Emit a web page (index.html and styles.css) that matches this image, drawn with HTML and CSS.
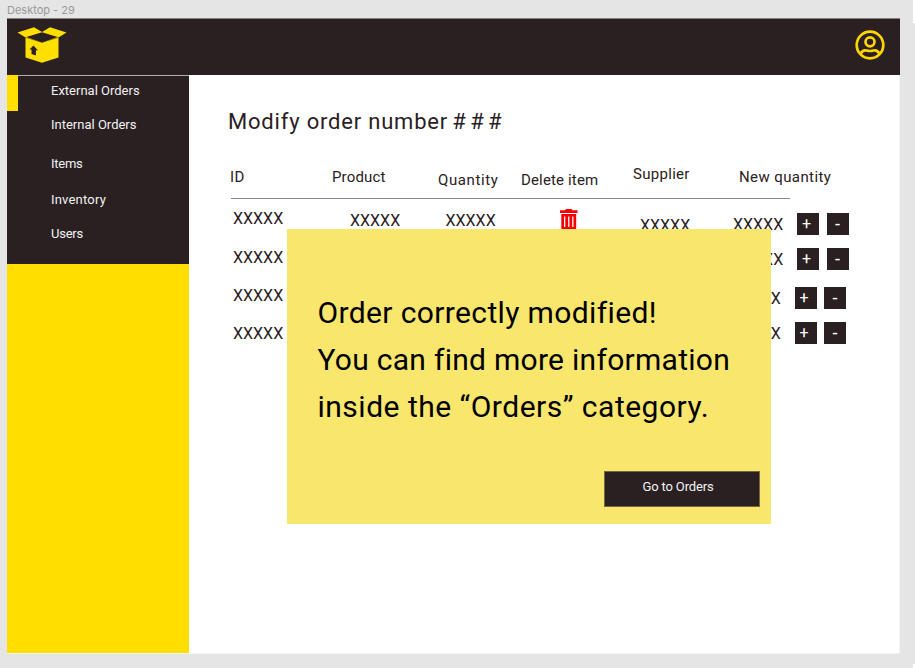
FILE: index.html
```html
<!DOCTYPE html>
<html lang="en">
<head>
<meta charset="utf-8">
<title>Modify order</title>
<link rel="stylesheet" href="styles.css">
</head>
<body>
<div class="frame-label">Desktop - 29</div>
<div class="frame">
  <header class="topbar">
    <svg class="logo" width="50" height="38" viewBox="0 0 50 38">
      <path fill="#ffdf00" d="M0.5 5.500 17 .2 25 5 33 .2 49.500 5.500 41.500 10.500V30.500L25 35.800 8.500 30.500V10.500Z"/>
      <path fill="#2a2022" d="M9.500 10 25 5.300 40.500 10 25 15.500Z"/>
      <path fill="#2a2022" d="M16.500 18.500 21 23.500 18.900 23.200V28.500L14.500 27V22.500L12.500 22.500Z"/>
      <path fill="none" stroke="#2a2022" stroke-width=".5" d="M8.500 10.300 25 15.300 41.500 10.300"/>
    </svg>
    <svg class="user" width="30" height="30" viewBox="0 0 30 30" fill="none" stroke="#ffd500" stroke-width="2.700">
      <circle cx="15" cy="15" r="13.300"/>
      <circle cx="15" cy="11.800" r="4.500"/>
      <path d="M5.500 24C7 20.500 9.500 20 11.500 20.500Q15 21.500 18.500 20.500C20.500 20 23 20.500 24.500 24"/>
    </svg>
  </header>
  <div class="content">
    <aside class="sidebar">
      <nav class="nav">
        <a class="nav-item active">External Orders</a>
        <a class="nav-item internal">Internal Orders</a>
        <a class="nav-item items">Items</a>
        <a class="nav-item inventory">Inventory</a>
        <a class="nav-item users">Users</a>
      </nav>
    </aside>
    <main class="main">
      <h1 class="title">Modify order number <span class="hashes">###</span></h1>
      <div class="thead">
        <span class="h-id">ID</span><span class="h-product">Product</span><span class="h-quantity">Quantity</span><span class="h-delete">Delete item</span><span class="h-supplier">Supplier</span><span class="h-new">New quantity</span>
      </div>
      <div class="row row-1">
        <span>XXXXX</span><span class="low">XXXXX</span><span class="low">XXXXX</span>
        <svg class="trash" width="18" height="22" viewBox="0 0 18 22"><path fill="#f90000" fill-rule="evenodd" d="M0 1.300H5L6 .1H11.500L12.500 1.300H17.500V4H0ZM1.300 5H16.200V19Q16.200 21 14.200 21H3.300Q1.300 21 1.300 19ZM4 7.500V18H5.300V7.500ZM8.100 7.500V18H9.400V7.500ZM12.200 7.500V18H13.500V7.500Z"/></svg>
        <span class="supplier">XXXXX</span>
        <div class="stepper"><span class="value">XXXXX</span><button class="step">+</button><button class="step minus">-</button></div>
      </div>
      <div class="row row-2">
        <span>XXXXX</span><span></span><span></span><span></span><span></span>
        <div class="stepper"><span class="value">XXXXX</span><button class="step">+</button><button class="step minus">-</button></div>
      </div>
      <div class="row row-3">
        <span>XXXXX</span><span></span><span></span><span></span><span></span>
        <div class="stepper"><span class="value">XXXXX</span><button class="step">+</button><button class="step minus">-</button></div>
      </div>
      <div class="row row-4">
        <span>XXXXX</span><span></span><span></span><span></span><span></span>
        <div class="stepper"><span class="value">XXXXX</span><button class="step">+</button><button class="step minus">-</button></div>
      </div>
    </main>
  </div>
</div>
<div class="modal">
  <p class="message"><span class="line-1">Order correctly modified!</span><span class="line-2">You can find more information</span><span class="line-3">inside the “Orders” category.</span></p>
  <button class="go">Go to Orders</button>
</div>
</body>
</html>
```
FILE: styles.css
```css
* { box-sizing: border-box; }
body {
  margin: 0;
  width: 915px;
  height: 668px;
  overflow: hidden;
  position: relative;
  background:
    linear-gradient(#fff, #fff) 913px 0 / 2px 23px no-repeat,
    linear-gradient(#fff, #fff) 913px 664px / 2px 4px no-repeat,
    #e5e5e5;
  font-family: Roboto, sans-serif;
  color: #2a2022;
}
button { border: 0; padding: 0; font-family: inherit; }
.frame-label {
  height: 18px;
  padding-left: 7px;
  font: 11px/20px Inter, sans-serif;
  color: #999;
}
.frame {
  width: 893px;
  height: 636px;
  margin-left: 7px;
  background: #fff;
  border-bottom: 1px solid #f2f2f2;
}
.topbar {
  display: flex;
  justify-content: space-between;
  height: 57px;
  padding: 8px 15px 0 10px;
  background: #2a2022;
  border-top: 1px solid #888384;
}
.user { margin-top: 2.500px; }
.content { display: flex; height: 578px; }
.sidebar { width: 182px; background: #ffde00; }
.nav {
  display: flex;
  flex-direction: column;
  height: 188.500px;
  background: #2a2022;
  border-top: 1px solid #b0adad;
}
.nav-item {
  flex: none;
  height: 20px;
  padding-left: 44px;
  font-size: 13px;
  line-height: 20px;
  color: #f2f2f2;
}
.nav-item.active {
  height: 36px;
  margin-top: -1px;
  padding-left: 33px;
  border-left: 11px solid #ffde00;
  line-height: 32px;
}
.internal { margin-top: 4px; }
.items { margin-top: 19px; letter-spacing: -.25px; }
.inventory { margin-top: 16px; letter-spacing: .2px; }
.users { margin-top: 14px; letter-spacing: -.25px; }
.main { flex: 1; padding-left: 35px; border-right: 1px solid #f5f5f5; }
.title {
  margin: 32px 0 0 4px;
  font-size: 22px;
  font-weight: 400;
  line-height: 30px;
  letter-spacing: .8px;
  white-space: nowrap;
}
.hashes { letter-spacing: 4.300px; margin-left: -2px; }
.thead {
  display: grid;
  grid-template-columns: 101px 106px 83px 112px 106px 51px;
  width: 559px;
  height: 62px;
  margin-left: 7px;
  padding-top: 30px;
  border-bottom: 1px solid #8c8888;
  font-size: 15px;
  line-height: 20px;
  white-space: nowrap;
}
.h-id { margin-left: -1px; letter-spacing: .4px; }
.h-product { letter-spacing: .15px; }
.h-quantity { padding-top: 3px; letter-spacing: .6px; }
.h-delete { padding-top: 3px; letter-spacing: .15px; }
.h-supplier { margin-top: -3px; letter-spacing: .3px; }
.h-new { letter-spacing: .4px; }
.row {
  display: grid;
  grid-template-columns: 117px 95.500px 114.500px 80px 93px 124px;
  height: 38px;
  margin-left: 9px;
  font-size: 16px;
  line-height: 20px;
}
.row-1 { height: 39px; margin-top: 10px; }
.low { padding-top: 2px; }
.supplier { padding-top: 7px; }
.trash { margin-top: 0; }
.stepper { display: flex; align-items: flex-start; height: 22px; margin-top: 4px; }
.row-2 .stepper { margin-top: 0; }
.row-3 .stepper { margin: 1px 0 0 -2.500px; }
.row-4 .stepper { margin: -2px 0 0 -2.500px; }
.value { width: 64px; padding-top: 2px; }
.step {
  flex: none;
  width: 22px;
  height: 21.500px;
  margin-right: 7.500px;
  padding-right: 3px;
  background: #2a2022;
  color: #fff;
  font-size: 16px;
  line-height: 22px;
}
.minus { padding-right: 0; font-size: 18px; }
.modal {
  position: absolute;
  left: 286.500px;
  top: 229px;
  width: 484.500px;
  height: 295px;
  padding: 59.500px 11px 0 31px;
  background: #f9e66d;
}
.message { margin: 0; font-size: 30px; line-height: 47px; color: #000; }
.message span { display: block; white-space: nowrap; }
.line-1 { letter-spacing: .37px; }
.line-2 { letter-spacing: .28px; }
.line-3 { letter-spacing: .5px; }
.go {
  display: block;
  width: 156px;
  height: 36px;
  margin: 41.500px 0 0 auto;
  padding: 0 8px 5px 0;
  background: #2a2022;
  border: 1px solid #74673f;
  color: #f2f2f2;
  font-size: 13px;
  letter-spacing: -.15px;
}
```
